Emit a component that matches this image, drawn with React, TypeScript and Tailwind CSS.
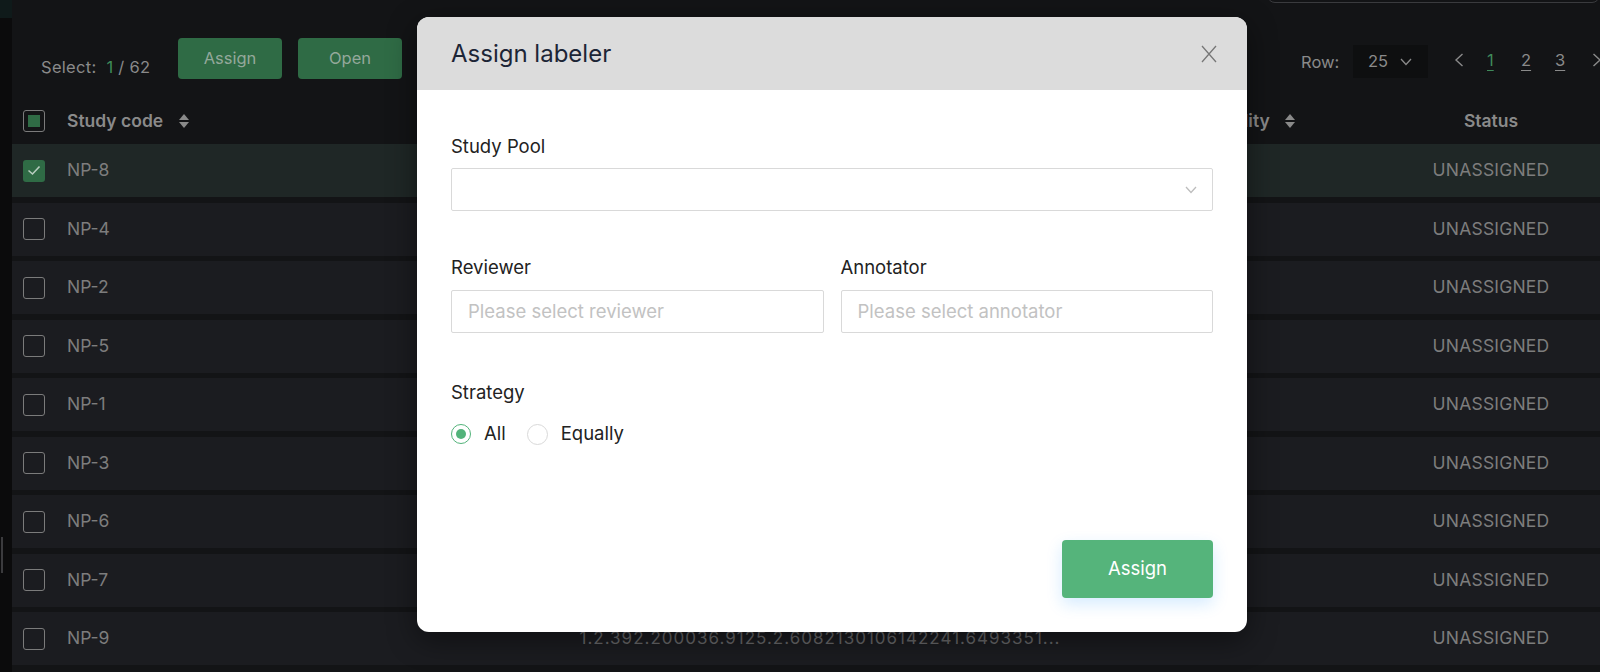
import React from 'react'

interface Study {
  code: string
  uid: string
  checked?: boolean
}

const studies: Study[] = [
  { code: 'NP-8', uid: '1.2.392.200036.9125.2.6082130106142241.6493351...', checked: true },
  { code: 'NP-4', uid: '1.2.392.200036.9125.2.6082130106142241.6493347...' },
  { code: 'NP-2', uid: '1.2.392.200036.9125.2.6082130106142241.6493345...' },
  { code: 'NP-5', uid: '1.2.392.200036.9125.2.6082130106142241.6493348...' },
  { code: 'NP-1', uid: '1.2.392.200036.9125.2.6082130106142241.6493344...' },
  { code: 'NP-3', uid: '1.2.392.200036.9125.2.6082130106142241.6493346...' },
  { code: 'NP-6', uid: '1.2.392.200036.9125.2.6082130106142241.6493349...' },
  { code: 'NP-7', uid: '1.2.392.200036.9125.2.6082130106142241.6493350...' },
  { code: 'NP-9', uid: '1.2.392.200036.9125.2.6082130106142241.6493351...' },
]

const SortIcon = () => (
  <svg width="12" height="16" viewBox="0 0 12 16" className="shrink-0">
    <path d="M6 1 L11 7 H1 Z" fill="#8a8a8a" />
    <path d="M6 15 L11 9 H1 Z" fill="#8a8a8a" />
  </svg>
)

const Chevron = ({ dir, color = '#8a8a8a' }: { dir: 'left' | 'right' | 'down'; color?: string }) => {
  if (dir === 'down') {
    return (
      <svg width="12" height="8" viewBox="0 0 12 8">
        <path d="M1 1 L6 6.5 L11 1" fill="none" stroke={color} strokeWidth="1.3" />
      </svg>
    )
  }
  return (
    <svg width="10" height="14" viewBox="0 0 10 14">
      <path
        d={dir === 'left' ? 'M8.5 1 L2 7 L8.5 13' : 'M1.5 1 L8 7 L1.5 13'}
        fill="none"
        stroke={color}
        strokeWidth="1.4"
      />
    </svg>
  )
}

const Checkbox = ({ state }: { state: 'on' | 'off' | 'partial' }) => {
  if (state === 'on') {
    return (
      <div className="w-[22px] h-[22px] rounded-[3px] bg-[#2f6b45] flex items-center justify-center">
        <svg width="14" height="11" viewBox="0 0 14 11">
          <path d="M1.5 5.5 L5.5 9 L12.5 1.5" fill="none" stroke="#b7cdbf" strokeWidth="1.6" />
        </svg>
      </div>
    )
  }
  return (
    <div className="w-[22px] h-[22px] rounded-[3px] border-[1.5px] border-[#7b7b7b] flex items-center justify-center">
      {state === 'partial' && <div className="w-[12px] h-[12px] bg-[#2f6b45]" />}
    </div>
  )
}

function Toolbar() {
  return (
    <div className="flex flex-col">
      <div className="h-0 flex justify-end">
        <div className="w-[333px] h-[40px] -mt-[37px] rounded-lg border border-[#3a3b3e]" />
      </div>
      <div className="h-[98px] flex items-start pl-[29px]">
        <div className="w-[137px] mt-[57px] leading-[20px] text-[16.5px] tracking-[0.3px] text-[#8a8a8a] whitespace-nowrap">
          Select:&nbsp;&nbsp;<span className="text-[#3f8a5a]">1</span> / 62
        </div>
        <button className="mt-[38px] w-[104px] h-[41px] rounded-[4px] bg-[#2f6b45] text-[16.5px] text-[#94a89b]">
          Assign
        </button>
        <button className="mt-[38px] ml-[16px] w-[104px] h-[41px] rounded-[4px] bg-[#2f6b45] text-[16.5px] text-[#94a89b]">
          Open
        </button>
        <div className="ml-auto flex items-start -mr-[25px]">
          <div className="w-[52px] mt-[52px] leading-[20px] text-[16.5px] text-[#8a8a8a]">Row:</div>
          <div className="mt-[45px] w-[75px] h-[33px] bg-[#0e0f10] flex items-center pl-[15px] gap-[12px] text-[16.5px] text-[#8a8a8a]">
            <span>25</span>
            <Chevron dir="down" />
          </div>
          <div className="ml-[26px] mt-[50px] flex items-center h-[20px] text-[16.5px]">
            <div className="w-[33px] flex"><Chevron dir="left" /></div>
            <div className="w-[34px] text-[#3f8a5a] underline underline-offset-4">1</div>
            <div className="w-[34px] text-[#8a8a8a] underline underline-offset-4">2</div>
            <div className="w-[37px] text-[#8a8a8a] underline underline-offset-4">3</div>
            <div className="w-[33px] flex"><Chevron dir="right" /></div>
          </div>
        </div>
      </div>
    </div>
  )
}

function Table() {
  return (
    <div className="flex flex-col">
      <div className="h-[46px] flex items-center text-[17.5px] font-semibold text-[#8a8a8a]">
        <div className="w-[55px] pl-[11px]"><Checkbox state="partial" /></div>
        <div className="w-[345px] flex items-center gap-[15px]">
          <span>Study code</span>
          <SortIcon />
        </div>
        <div className="w-[780px]" />
        <div className="w-[190px] pl-[4px] flex items-center gap-[14px]">
          <span>Modality</span>
          <SortIcon />
        </div>
        <div className="flex-1 text-center">Status</div>
      </div>
      <div className="flex flex-col gap-[5.5px]">
        {studies.map((s) => (
          <div
            key={s.code}
            className={`h-[53px] flex items-center text-[17.5px] text-[#7d7d7d] ${s.checked ? 'bg-[#1f2726]' : 'bg-[#1b1c20]'}`}
          >
            <div className="w-[55px] pl-[11px]"><Checkbox state={s.checked ? 'on' : 'off'} /></div>
            <div className="w-[345px]">{s.code}</div>
            <div className="w-[780px] pl-[36px] text-center text-[17px] tracking-[1px] text-[#68686a] whitespace-nowrap">{s.uid}</div>
            <div className="w-[190px]" />
            <div className="flex-1 text-center tracking-[0.2px]">UNASSIGNED</div>
          </div>
        ))}
      </div>
    </div>
  )
}

function AssignModal() {
  return (
    <div className="absolute left-[417px] top-[17px] w-[830px] h-[615px] rounded-[12px] overflow-hidden bg-white flex flex-col shadow-[0_8px_30px_rgba(0,0,0,0.45)]">
      <div className="h-[73px] shrink-0 bg-[#dcdcdc] flex items-center justify-between pl-[34px] pr-[30px]">
        <h2 className="text-[24px] text-[#1c2536]">Assign labeler</h2>
        <svg width="16" height="18" viewBox="0 0 16 18">
          <path d="M1 1 L15 17 M15 1 L1 17" stroke="#777" strokeWidth="1.3" />
        </svg>
      </div>
      <div className="flex-1 flex flex-col px-[34px] pt-[44px] pb-[34px] text-[18.5px] text-[#222]">
        <label className="leading-[24px]">Study Pool</label>
        <div className="mt-[10px] h-[43px] border border-[#d9d9d9] rounded-[2px] flex items-center justify-end pr-[15px]">
          <Chevron dir="down" color="#bdbdbd" />
        </div>
        <div className="mt-[44px] flex gap-[17px]">
          <div className="flex-1 flex flex-col">
            <label className="leading-[24px]">Reviewer</label>
            <div className="mt-[11px] h-[43px] border border-[#d9d9d9] rounded-[2px] flex items-center px-[16px] text-[#c2c2c2]">
              Please select reviewer
            </div>
          </div>
          <div className="flex-1 flex flex-col">
            <label className="leading-[24px]">Annotator</label>
            <div className="mt-[11px] h-[43px] border border-[#d9d9d9] rounded-[2px] flex items-center px-[16px] text-[#c2c2c2]">
              Please select annotator
            </div>
          </div>
        </div>
        <label className="mt-[47px] leading-[24px]">Strategy</label>
        <div className="mt-[18px] h-[24px] flex items-center">
          <div className="w-[20px] h-[20px] rounded-full border border-[#52b37a] flex items-center justify-center">
            <div className="w-[10px] h-[10px] rounded-full bg-[#52b37a]" />
          </div>
          <span className="ml-[13px]">All</span>
          <div className="ml-[21px] w-[21px] h-[21px] rounded-full border border-[#d9d9d9]" />
          <span className="ml-[13px]">Equally</span>
        </div>
        <div className="mt-auto flex justify-end">
          <button className="w-[151px] h-[58px] rounded-[4px] bg-[#55b47b] text-white text-[18.5px] shadow-[0_6px_16px_rgba(24,144,255,0.18)]">
            Assign
          </button>
        </div>
      </div>
    </div>
  )
}

export default function App() {
  return (
    <div className="relative w-[1600px] h-[672px] overflow-hidden bg-[#131416] flex font-['Inter','Noto_Sans',sans-serif]">
      <div className="w-[12px] shrink-0 bg-[#0b0b0c] flex flex-col">
        <div className="h-[18px] bg-[#0f1a1a]" />
        <div className="mt-[519px] ml-[1px] h-[36px] w-[2px] bg-[#3b3b3e]" />
      </div>
      <div className="flex-1 flex flex-col">
        <Toolbar />
        <Table />
      </div>
      <AssignModal />
    </div>
  )
}
